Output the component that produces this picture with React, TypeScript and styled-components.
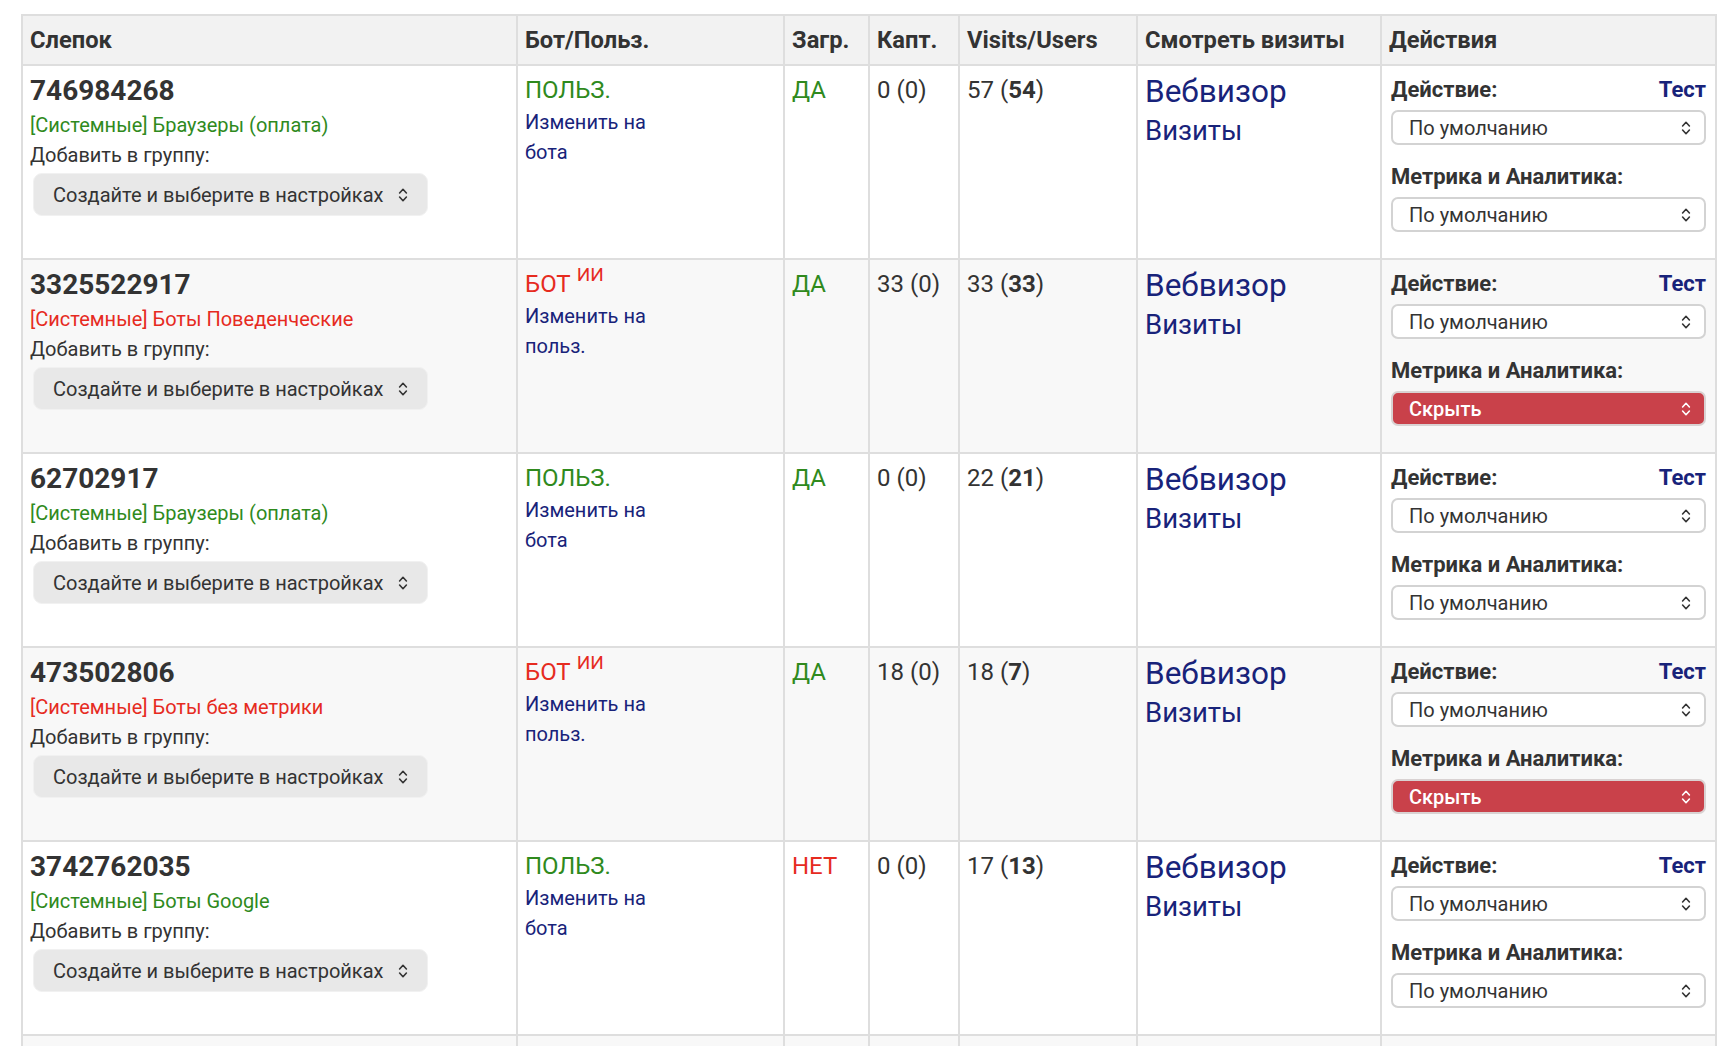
import React from "react";
import styled, { createGlobalStyle, css } from "styled-components";

const GlobalStyle = createGlobalStyle`
  html, body {
    margin: 0;
    padding: 0;
    background: #ffffff;
  }
  body {
    font-family: Roboto, "Noto Sans", "Liberation Sans", sans-serif;
    color: #333333;
    -webkit-font-smoothing: antialiased;
  }
`;

type Tone = "good" | "bad";

const toneColor = (t: Tone) => (t === "good" ? "#2f8a1d" : "#e62b1f");

const Page = styled.div`
  padding: 14px 21px 40px;
`;

const Table = styled.table`
  width: 100%;
  table-layout: fixed;
  border-collapse: collapse;
  border: 2px solid #dedede;
`;

const HeadRow = styled.tr`
  height: 50px;
  background: #f2f2f2;
`;

const HeadCell = styled.th`
  border: 2px solid #dedede;
  padding: 0 7px;
  text-align: left;
  font-size: 23.7px;
  font-weight: 700;
  color: #333333;
  white-space: nowrap;
`;

const BodyRow = styled.tr<{ $striped: boolean }>`
  height: 194px;
  background: ${(p) => (p.$striped ? "#f8f8f8" : "#ffffff")};
`;

const Cell = styled.td<{ $wide?: boolean }>`
  border: 2px solid #dedede;
  padding: ${(p) => (p.$wide ? "5px 9px" : "6px 7px")};
  vertical-align: top;
`;

const RecordId = styled.div`
  font-size: 28px;
  font-weight: 700;
  line-height: 38px;
  color: #333333;
`;

const GroupTag = styled.div<{ $tone: Tone }>`
  font-size: 20px;
  line-height: 31px;
  color: ${(p) => toneColor(p.$tone)};
`;

const FieldLabel = styled.div`
  font-size: 20px;
  line-height: 29px;
  color: #333333;
`;

const Chevrons = () => (
  <svg width="10" height="18" viewBox="0 0 10 18" fill="none" aria-hidden="true">
    <path
      d="M1.6 7 L5 3.3 L8.4 7 M1.6 11 L5 14.7 L8.4 11"
      stroke="currentColor"
      strokeWidth="1.6"
      strokeLinecap="round"
      strokeLinejoin="round"
    />
  </svg>
);

const GroupPicker = styled.div`
  margin: 3px 0 0 3px;
  width: 395px;
  height: 43px;
  box-sizing: border-box;
  display: flex;
  align-items: center;
  justify-content: space-between;
  padding: 0 19px 0 19px;
  background: #e8e8e8;
  border: 1px solid #f1f1f1;
  border-radius: 9px;
  font-size: 20px;
  color: #333333;
`;

const Verdict = styled.div<{ $tone: Tone }>`
  font-size: 24px;
  line-height: 37px;
  color: ${(p) => toneColor(p.$tone)};
  white-space: nowrap;
`;

const Mark = styled.sup`
  font-size: 19px;
  margin-left: 6px;
  vertical-align: 11px;
  line-height: 0;
`;

const SwitchLink = styled.a`
  display: block;
  width: 130px;
  margin-top: -2px;
  font-size: 20px;
  line-height: 30px;
  color: #18237a;
  text-decoration: none;
  cursor: pointer;
`;

const Count = styled.div`
  font-size: 24px;
  line-height: 37px;
  color: #333333;
  white-space: nowrap;

  b {
    font-weight: 700;
  }
`;

const ViewLink = styled.a<{ $major?: boolean }>`
  display: block;
  color: #18237a;
  text-decoration: none;
  cursor: pointer;
  white-space: nowrap;
  ${(p) =>
    p.$major
      ? css`
          font-size: 31.5px;
          line-height: 39px;
        `
      : css`
          font-size: 27.5px;
          line-height: 40px;
        `}
`;

const ActionHead = styled.div<{ $gap?: boolean }>`
  display: flex;
  align-items: center;
  justify-content: space-between;
  height: 37px;
  margin-top: ${(p) => (p.$gap ? "13px" : "0")};
`;

const ActionTitle = styled.span`
  font-size: 22px;
  font-weight: 700;
  color: #333333;
`;

const TestLink = styled.a`
  font-size: 22px;
  font-weight: 700;
  color: #18237a;
  text-decoration: none;
  cursor: pointer;
`;

const SelectBox = styled.div<{ $danger?: boolean }>`
  margin-top: 2px;
  height: 35px;
  box-sizing: border-box;
  display: flex;
  align-items: center;
  justify-content: space-between;
  padding: 0 13px 0 16px;
  border-radius: 7px;
  font-size: 20px;
  ${(p) =>
    p.$danger
      ? css`
          background: #c9414a;
          border: 2px solid #d9d2d2;
          color: #ffffff;
          font-weight: 500;
        `
      : css`
          background: #ffffff;
          border: 2px solid #d3d3d3;
          color: #333333;
        `}
`;

type Row = {
  id: string;
  group: string;
  groupTone: Tone;
  bot: boolean;
  loaded: boolean;
  captcha: string;
  visits: number;
  users: number;
  metric: "default" | "hide";
};

const rows: Row[] = [
  { id: "746984268", group: "[Системные] Браузеры (оплата)", groupTone: "good", bot: false, loaded: true, captcha: "0 (0)", visits: 57, users: 54, metric: "default" },
  { id: "3325522917", group: "[Системные] Боты Поведенческие", groupTone: "bad", bot: true, loaded: true, captcha: "33 (0)", visits: 33, users: 33, metric: "hide" },
  { id: "62702917", group: "[Системные] Браузеры (оплата)", groupTone: "good", bot: false, loaded: true, captcha: "0 (0)", visits: 22, users: 21, metric: "default" },
  { id: "473502806", group: "[Системные] Боты без метрики", groupTone: "bad", bot: true, loaded: true, captcha: "18 (0)", visits: 18, users: 7, metric: "hide" },
  { id: "3742762035", group: "[Системные] Боты Google", groupTone: "good", bot: false, loaded: false, captcha: "0 (0)", visits: 17, users: 13, metric: "default" },
  { id: "1190457723", group: "[Системные] Браузеры (оплата)", groupTone: "good", bot: false, loaded: true, captcha: "0 (0)", visits: 12, users: 11, metric: "default" },
];

const widths = [495, 267, 85, 90, 178, 244, 335];

export default function App() {
  return (
    <Page>
      <GlobalStyle />
      <Table>
        <colgroup>
          {widths.map((w, i) => (
            <col key={i} style={{ width: w }} />
          ))}
        </colgroup>
        <thead>
          <HeadRow>
            <HeadCell>Слепок</HeadCell>
            <HeadCell>Бот/Польз.</HeadCell>
            <HeadCell>Загр.</HeadCell>
            <HeadCell>Капт.</HeadCell>
            <HeadCell>Visits/Users</HeadCell>
            <HeadCell>Смотреть визиты</HeadCell>
            <HeadCell>Действия</HeadCell>
          </HeadRow>
        </thead>
        <tbody>
          {rows.map((r, i) => (
            <BodyRow key={r.id} $striped={i % 2 === 1}>
              <Cell>
                <RecordId>{r.id}</RecordId>
                <GroupTag $tone={r.groupTone}>{r.group}</GroupTag>
                <FieldLabel>Добавить в группу:</FieldLabel>
                <GroupPicker>
                  <span>Создайте и выберите в настройках</span>
                  <Chevrons />
                </GroupPicker>
              </Cell>
              <Cell>
                {r.bot ? (
                  <Verdict $tone="bad">
                    БОТ<Mark>ИИ</Mark>
                  </Verdict>
                ) : (
                  <Verdict $tone="good">ПОЛЬЗ.</Verdict>
                )}
                <SwitchLink>{r.bot ? "Изменить на польз." : "Изменить на бота"}</SwitchLink>
              </Cell>
              <Cell>
                <Verdict $tone={r.loaded ? "good" : "bad"}>{r.loaded ? "ДА" : "НЕТ"}</Verdict>
              </Cell>
              <Cell>
                <Count>{r.captcha}</Count>
              </Cell>
              <Cell>
                <Count>
                  {r.visits} (<b>{r.users}</b>)
                </Count>
              </Cell>
              <Cell>
                <ViewLink $major>Вебвизор</ViewLink>
                <ViewLink>Визиты</ViewLink>
              </Cell>
              <Cell $wide>
                <ActionHead>
                  <ActionTitle>Действие:</ActionTitle>
                  <TestLink>Тест</TestLink>
                </ActionHead>
                <SelectBox>
                  <span>По умолчанию</span>
                  <Chevrons />
                </SelectBox>
                <ActionHead $gap>
                  <ActionTitle>Метрика и Аналитика:</ActionTitle>
                </ActionHead>
                <SelectBox $danger={r.metric === "hide"}>
                  <span>{r.metric === "hide" ? "Скрыть" : "По умолчанию"}</span>
                  <Chevrons />
                </SelectBox>
              </Cell>
            </BodyRow>
          ))}
        </tbody>
      </Table>
    </Page>
  );
}
